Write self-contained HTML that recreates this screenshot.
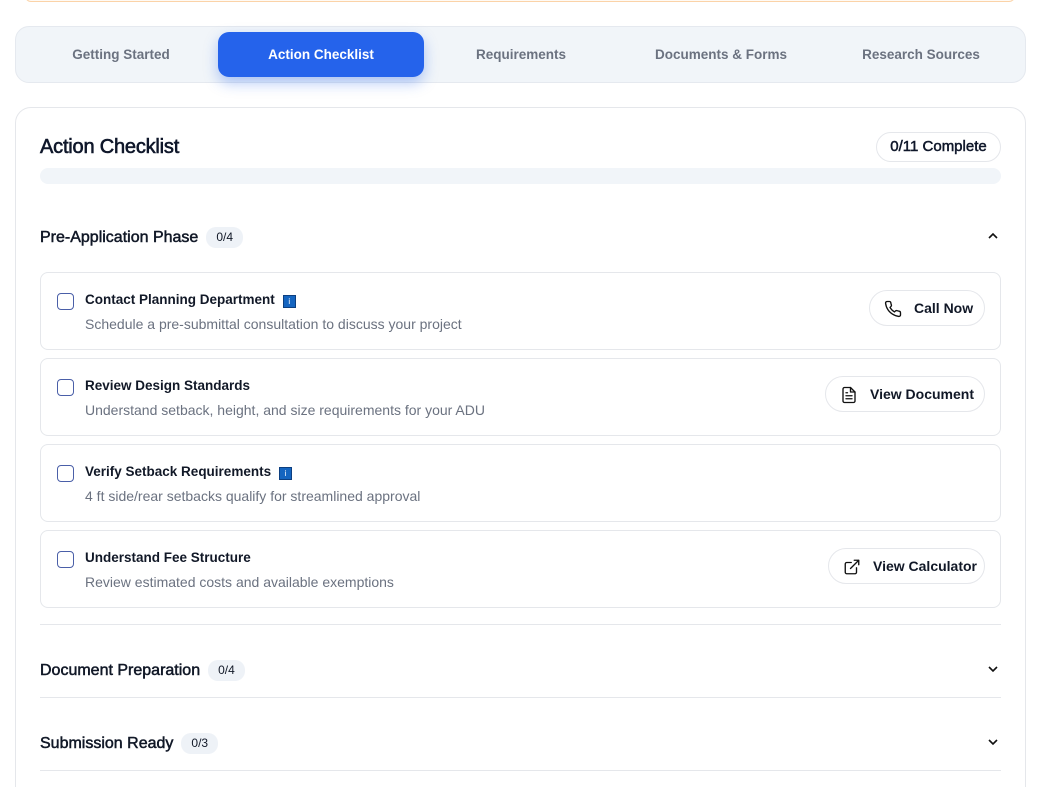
<!DOCTYPE html>
<html><head><meta charset="utf-8"><style>
*{box-sizing:border-box;margin:0;padding:0}
html,body{width:1048px;height:787px;overflow:hidden}
body{background:#fff;font-family:"Liberation Sans",sans-serif;color:#111827;position:relative}
.a{position:absolute}
.topbar{left:25px;top:-4px;width:990px;height:6px;border:1px solid #fbd3a8;border-top:none;border-radius:0 0 8px 8px;background:#fffaf4}
.tabs{left:15px;top:26px;width:1011px;height:57px;background:#f1f5f9;border:1px solid #e5e9ef;border-radius:14px}
.tab{position:absolute;top:0;height:55px;line-height:55px;font-size:13.5px;font-weight:bold;color:#6b7280;text-align:center}
.act{left:202px;top:5px;width:206px;height:45px;line-height:45px;background:#2563eb;color:#fff;border-radius:11px;box-shadow:0 6px 14px rgba(37,99,235,.35)}
.card{left:15px;top:107px;width:1011px;height:700px;border:1px solid #e5e7eb;border-radius:16px;background:#fff}
h1{position:absolute;left:40px;top:136px;font-size:20px;font-weight:normal;letter-spacing:-0.2px;color:#0f172a;-webkit-text-stroke:0.6px #0f172a}
.pill{left:876px;top:132px;width:125px;height:30px;border:1px solid #e5e7eb;border-radius:15px;font-size:15px;line-height:28px;text-align:center;color:#0f172a;-webkit-text-stroke:0.5px #0f172a}
.prog{left:40px;top:168px;width:961px;height:16px;background:#f1f5f9;border-radius:8px}
.sec{position:absolute;left:40px;font-size:16px;color:#111827;-webkit-text-stroke:0.5px #111827}
.badge{display:inline-block;margin-left:8px;background:#eef2f7;border-radius:10px;padding:0 10px;height:21px;line-height:21px;font-size:12px;-webkit-text-stroke:0;vertical-align:1px}
.item{position:absolute;left:40px;width:961px;height:78px;border:1px solid #e5e7eb;border-radius:8px;background:#fff}
.cb{position:absolute;left:16px;top:20px;width:17px;height:17px;border:1.5px solid #4a5fa8;border-radius:4px}
.t{position:absolute;left:44px;top:19px;font-size:13.5px;font-weight:bold;color:#111827}
.d{position:absolute;left:44px;top:43px;font-size:14px;color:#6b7280}
.i{display:inline-block;width:13px;height:13px;background:#1565c0;border:1px solid #0d3f80;color:#fff;font-size:8px;line-height:11px;text-align:center;vertical-align:0;margin-left:8px;font-weight:normal}
.btn{position:absolute;top:17px;height:36px;border:1px solid #e5e7eb;border-radius:18px;font-size:14px;font-weight:bold;line-height:34px;color:#111827;padding-left:44px}
.btn svg{position:absolute;left:14px;top:9px}
.line{position:absolute;left:40px;width:961px;height:1px;background:#e5e7eb}
.chev{position:absolute;left:986px}
</style></head><body>
<div class="a topbar"></div>
<div class="a tabs">
<div class="tab" style="left:5px;width:200px">Getting Started</div>
<div class="tab act">Action Checklist</div>
<div class="tab" style="left:405px;width:200px">Requirements</div>
<div class="tab" style="left:605px;width:200px">Documents &amp; Forms</div>
<div class="tab" style="left:805px;width:200px">Research Sources</div>
</div>
<div class="a card"></div>
<h1>Action Checklist</h1>
<div class="a pill">0/11 Complete</div>
<div class="a prog"></div>

<div class="sec" style="top:227px">Pre-Application Phase<span class="badge">0/4</span></div>
<svg class="chev" style="top:230px" width="14" height="12" viewBox="0 0 14 12"><path d="M3 8l4-4 4 4" fill="none" stroke="#111" stroke-width="1.6"/></svg>

<div class="item" style="top:272px"><div class="cb"></div><div class="t">Contact Planning Department<span class="i">i</span></div><div class="d">Schedule a pre-submittal consultation to discuss your project</div>
<div class="btn" style="left:828px;width:116px">Call Now<svg width="18" height="18" viewBox="0 0 24 24" fill="none" stroke="#111" stroke-width="1.8" stroke-linecap="round" stroke-linejoin="round"><path d="M22 16.9v3a2 2 0 0 1-2.2 2 19.8 19.8 0 0 1-8.6-3.1 19.5 19.5 0 0 1-6-6A19.8 19.8 0 0 1 2.1 4.2 2 2 0 0 1 4.1 2h3a2 2 0 0 1 2 1.700c.1 1 .4 1.9.7 2.8a2 2 0 0 1-.5 2.1L8 9.9a16 16 0 0 0 6 6l1.3-1.3a2 2 0 0 1 2.1-.4c.9.3 1.8.6 2.8.7a2 2 0 0 1 1.7 2z"/></svg></div></div>

<div class="item" style="top:358px"><div class="cb"></div><div class="t">Review Design Standards</div><div class="d">Understand setback, height, and size requirements for your ADU</div>
<div class="btn" style="left:784px;width:160px">View Document<svg width="18" height="18" viewBox="0 0 24 24" fill="none" stroke="#111" stroke-width="1.8" stroke-linecap="round" stroke-linejoin="round"><path d="M14 2H6a2 2 0 0 0-2 2v16a2 2 0 0 0 2 2h12a2 2 0 0 0 2-2V8z"/><path d="M14 2v6h6M16 13H8M16 17H8M10 9H8"/></svg></div></div>

<div class="item" style="top:444px"><div class="cb"></div><div class="t">Verify Setback Requirements<span class="i">i</span></div><div class="d">4 ft side/rear setbacks qualify for streamlined approval</div></div>

<div class="item" style="top:530px"><div class="cb"></div><div class="t">Understand Fee Structure</div><div class="d">Review estimated costs and available exemptions</div>
<div class="btn" style="left:787px;width:157px">View Calculator<svg width="18" height="18" viewBox="0 0 24 24" fill="none" stroke="#111" stroke-width="1.8" stroke-linecap="round" stroke-linejoin="round"><path d="M18 13v6a2 2 0 0 1-2 2H5a2 2 0 0 1-2-2V8a2 2 0 0 1 2-2h6M15 3h6v6M10 14L21 3"/></svg></div></div>

<div class="line" style="top:624px"></div>
<div class="sec" style="top:660px">Document Preparation<span class="badge">0/4</span></div>
<svg class="chev" style="top:663px" width="14" height="12" viewBox="0 0 14 12"><path d="M3 4l4 4 4-4" fill="none" stroke="#111" stroke-width="1.6"/></svg>
<div class="line" style="top:697px"></div>
<div class="sec" style="top:733px">Submission Ready<span class="badge">0/3</span></div>
<svg class="chev" style="top:736px" width="14" height="12" viewBox="0 0 14 12"><path d="M3 4l4 4 4-4" fill="none" stroke="#111" stroke-width="1.6"/></svg>
<div class="line" style="top:770px"></div>
</body></html>
